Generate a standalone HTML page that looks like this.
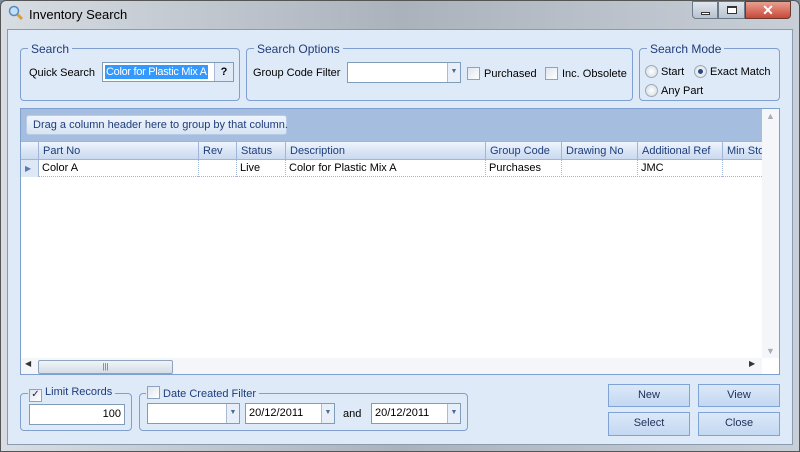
<!DOCTYPE html>
<html><head><meta charset="utf-8"><style>
*{box-sizing:border-box;margin:0;padding:0}
body{width:800px;height:452px;overflow:hidden;font-family:"Liberation Sans",sans-serif;font-size:11px;color:#000;background:#7a8a9a;white-space:nowrap}
.a{position:absolute}
.win{left:0;top:0;width:800px;height:452px;background:linear-gradient(90deg,#d8dde3,#aab2bc 50%,#c8cfd7);border:1px solid #555;border-radius:6px 6px 0 0}
.client{left:7px;top:29px;width:786px;height:416px;background:#dfeaf8;border:1px solid #8a9bb0}
.gb{border:1px solid #7f9fcf;border-radius:4px}
.gl{background:#dfeaf8;color:#1e3d7a;padding:0 3px;font-size:12px}
.tb{background:#fff;border:1px solid #7f9db9;overflow:hidden}
.dd{border-left:1px solid #a8bcd8;background:#e8eff8;width:13px;top:0;bottom:0;right:0;position:absolute;color:#4a6a9a;font-size:7px;text-align:center;line-height:18px}
.cb{width:13px;height:13px;border:1px solid #8fa3bf;background:linear-gradient(135deg,#dfe5ee,#fff)}
.rb{width:13px;height:13px;border-radius:50%;border:1px solid #9aaabb;background:radial-gradient(#fff,#d0d8e0)}
.btn{background:linear-gradient(#dbe8f8,#c4d8f2);border:1px solid #7fa3d4;text-align:center;line-height:20px;color:#1e2f5a}
.hd{top:142px;height:18px;line-height:18px;color:#1e3d7a;border-right:1px solid #9fb6d8;padding-left:4px;overflow:hidden}
.cl{top:160px;height:17px;line-height:17px;border-right:1px dotted #9fb6d8;padding-left:3px}
</style></head><body>
<div class="a win"></div>
<div class="a" style="left:8px;top:5px;width:16px;height:16px"><svg width="16" height="16"><circle cx="6" cy="6" r="4.5" fill="#bfe0f8" stroke="#5a8ab8" stroke-width="1.5"/><path d="M9.5 9.5L14 14" stroke="#d8a030" stroke-width="3"/></svg></div>
<div class="a" style="left:29px;top:7px;font-size:13px">Inventory Search</div>
<div class="a" style="left:692px;top:1px;width:26px;height:18px;border:1px solid #6a7a8a;border-radius:0 0 0 4px;background:linear-gradient(#e0e6ee,#b8c2ce)"><div class="a" style="left:8px;top:10px;width:9px;height:3px;border:1px solid #333;background:#fff"></div></div>
<div class="a" style="left:718px;top:1px;width:27px;height:18px;border:1px solid #6a7a8a;background:linear-gradient(#e0e6ee,#b8c2ce)"><div class="a" style="left:8px;top:4px;width:10px;height:8px;border:1px solid #333;border-top-width:2px;background:#fff"></div></div>
<div class="a" style="left:745px;top:1px;width:46px;height:18px;border:1px solid #6a3a30;border-radius:0 0 4px 0;background:linear-gradient(#e8a090,#c8483a);color:#fff;font-weight:bold;text-align:center;line-height:16px;font-size:14px">✕</div>
<div class="a client"></div>

<div class="a gb" style="left:20px;top:48px;width:220px;height:53px"></div>
<div class="a gl" style="left:28px;top:42px">Search</div>
<div class="a" style="left:29px;top:67px">Quick Search</div>
<div class="a tb" style="left:102px;top:62px;width:132px;height:20px"><div class="a" style="left:2px;top:2px;height:14px;background:#3399ff;color:#fff;line-height:14px;padding:0 1px;letter-spacing:-0.3px">Color for Plastic Mix A</div><div class="a" style="right:0;top:0;width:19px;height:18px;border-left:1px solid #a8bcd8;background:#e0eaf6;text-align:center;line-height:18px;font-weight:bold;font-size:11px">?</div></div>

<div class="a gb" style="left:246px;top:48px;width:387px;height:53px"></div>
<div class="a gl" style="left:254px;top:42px">Search Options</div>
<div class="a" style="left:253px;top:67px">Group Code Filter</div>
<div class="a tb" style="left:347px;top:62px;width:114px;height:21px"><div class="dd">▼</div></div>
<div class="a cb" style="left:467px;top:67px"></div><div class="a" style="left:484px;top:68px">Purchased</div>
<div class="a cb" style="left:545px;top:67px"></div><div class="a" style="left:562px;top:68px">Inc. Obsolete</div>

<div class="a gb" style="left:639px;top:48px;width:141px;height:53px"></div>
<div class="a gl" style="left:647px;top:42px">Search Mode</div>
<div class="a rb" style="left:645px;top:65px"></div><div class="a" style="left:661px;top:66px">Start</div>
<div class="a rb" style="left:694px;top:65px"><div class="a" style="left:3px;top:3px;width:5px;height:5px;border-radius:50%;background:#2a4a7a"></div></div><div class="a" style="left:710px;top:66px">Exact Match</div>
<div class="a rb" style="left:645px;top:84px"></div><div class="a" style="left:661px;top:85px">Any Part</div>

<div class="a" style="left:20px;top:108px;width:760px;height:267px;background:#fff;border:1px solid #7f9fcf"></div>
<div class="a" style="left:21px;top:109px;width:741px;height:32px;background:#a5bee0"></div>
<div class="a" style="left:26px;top:115px;width:261px;height:20px;background:linear-gradient(#f0f5fc,#d8e4f4);border:1px solid #b8cce6;border-radius:3px;line-height:18px;padding-left:6px;color:#1e3d7a">Drag a column header here to group by that column.</div>
<div class="a" style="left:21px;top:141px;width:741px;height:19px;background:linear-gradient(#f0f5fc,#dae6f6 50%,#cbdaf0);border-top:1px solid #9fb6d8;border-bottom:1px solid #9fb6d8"></div>
<div class="a hd" style="left:21px;width:18px"></div>
<div class="a hd" style="left:39px;width:160px">Part No</div>
<div class="a hd" style="left:199px;width:38px">Rev</div>
<div class="a hd" style="left:237px;width:49px">Status</div>
<div class="a hd" style="left:286px;width:200px">Description</div>
<div class="a hd" style="left:486px;width:76px">Group Code</div>
<div class="a hd" style="left:562px;width:76px">Drawing No</div>
<div class="a hd" style="left:638px;width:85px">Additional Ref</div>
<div class="a hd" style="left:723px;width:39px;border:0">Min Stock</div>
<div class="a" style="left:21px;top:160px;width:18px;height:17px;background:#dfe9f6;border-right:1px solid #9fb6d8;color:#5a7ab0;font-size:8px;line-height:17px;padding-left:4px">▶</div>
<div class="a" style="left:39px;top:176px;width:723px;border-top:1px dotted #9fb6d8"></div>
<div class="a cl" style="left:39px;width:160px">Color A</div>
<div class="a cl" style="left:199px;width:38px"></div>
<div class="a cl" style="left:237px;width:49px">Live</div>
<div class="a cl" style="left:286px;width:200px">Color for Plastic Mix A</div>
<div class="a cl" style="left:486px;width:76px">Purchases</div>
<div class="a cl" style="left:562px;width:76px"></div>
<div class="a cl" style="left:638px;width:85px">JMC</div>
<div class="a" style="left:762px;top:109px;width:17px;height:249px;background:#f4f6f9;color:#aab;font-size:9px;text-align:center;line-height:14px">▲<div class="a" style="left:0;bottom:0;width:17px">▼</div></div>
<div class="a" style="left:21px;top:358px;width:741px;height:16px;background:#f4f6f9"></div>
<div class="a" style="left:25px;top:359px;font-size:8px;color:#333">◀</div>
<div class="a" style="left:749px;top:359px;font-size:8px;color:#333">▶</div>
<div class="a" style="left:38px;top:360px;width:135px;height:14px;border:1px solid #8fa3bf;border-radius:2px;background:linear-gradient(#f0f4f8,#d4dce6);text-align:center;font-size:8px;line-height:12px;color:#666">|||</div>

<div class="a gb" style="left:20px;top:393px;width:112px;height:38px"></div>
<div class="a gl" style="left:28px;top:386px;padding-left:1px;font-size:11px"><span class="cb" style="display:inline-block;vertical-align:-2px;font-size:10px;line-height:10px;text-align:center;color:#224">✓</span> Limit Records</div>
<div class="a tb" style="left:29px;top:404px;width:96px;height:21px;text-align:right;padding-right:3px;line-height:19px">100</div>
<div class="a gb" style="left:139px;top:393px;width:329px;height:38px"></div>
<div class="a gl" style="left:146px;top:386px;padding-left:1px;font-size:11px"><span class="cb" style="display:inline-block;vertical-align:-2px"></span> Date Created Filter</div>
<div class="a tb" style="left:147px;top:403px;width:93px;height:21px"><div class="dd">▼</div></div>
<div class="a tb" style="left:245px;top:403px;width:90px;height:21px;line-height:19px;padding-left:3px">20/12/2011<div class="dd">▼</div></div>
<div class="a" style="left:343px;top:408px">and</div>
<div class="a tb" style="left:371px;top:403px;width:90px;height:21px;line-height:19px;padding-left:3px">20/12/2011<div class="dd">▼</div></div>

<div class="a btn" style="left:608px;top:384px;width:82px;height:23px">New</div>
<div class="a btn" style="left:698px;top:384px;width:82px;height:23px">View</div>
<div class="a btn" style="left:608px;top:412px;width:82px;height:24px">Select</div>
<div class="a btn" style="left:698px;top:412px;width:82px;height:24px">Close</div>
</body></html>
